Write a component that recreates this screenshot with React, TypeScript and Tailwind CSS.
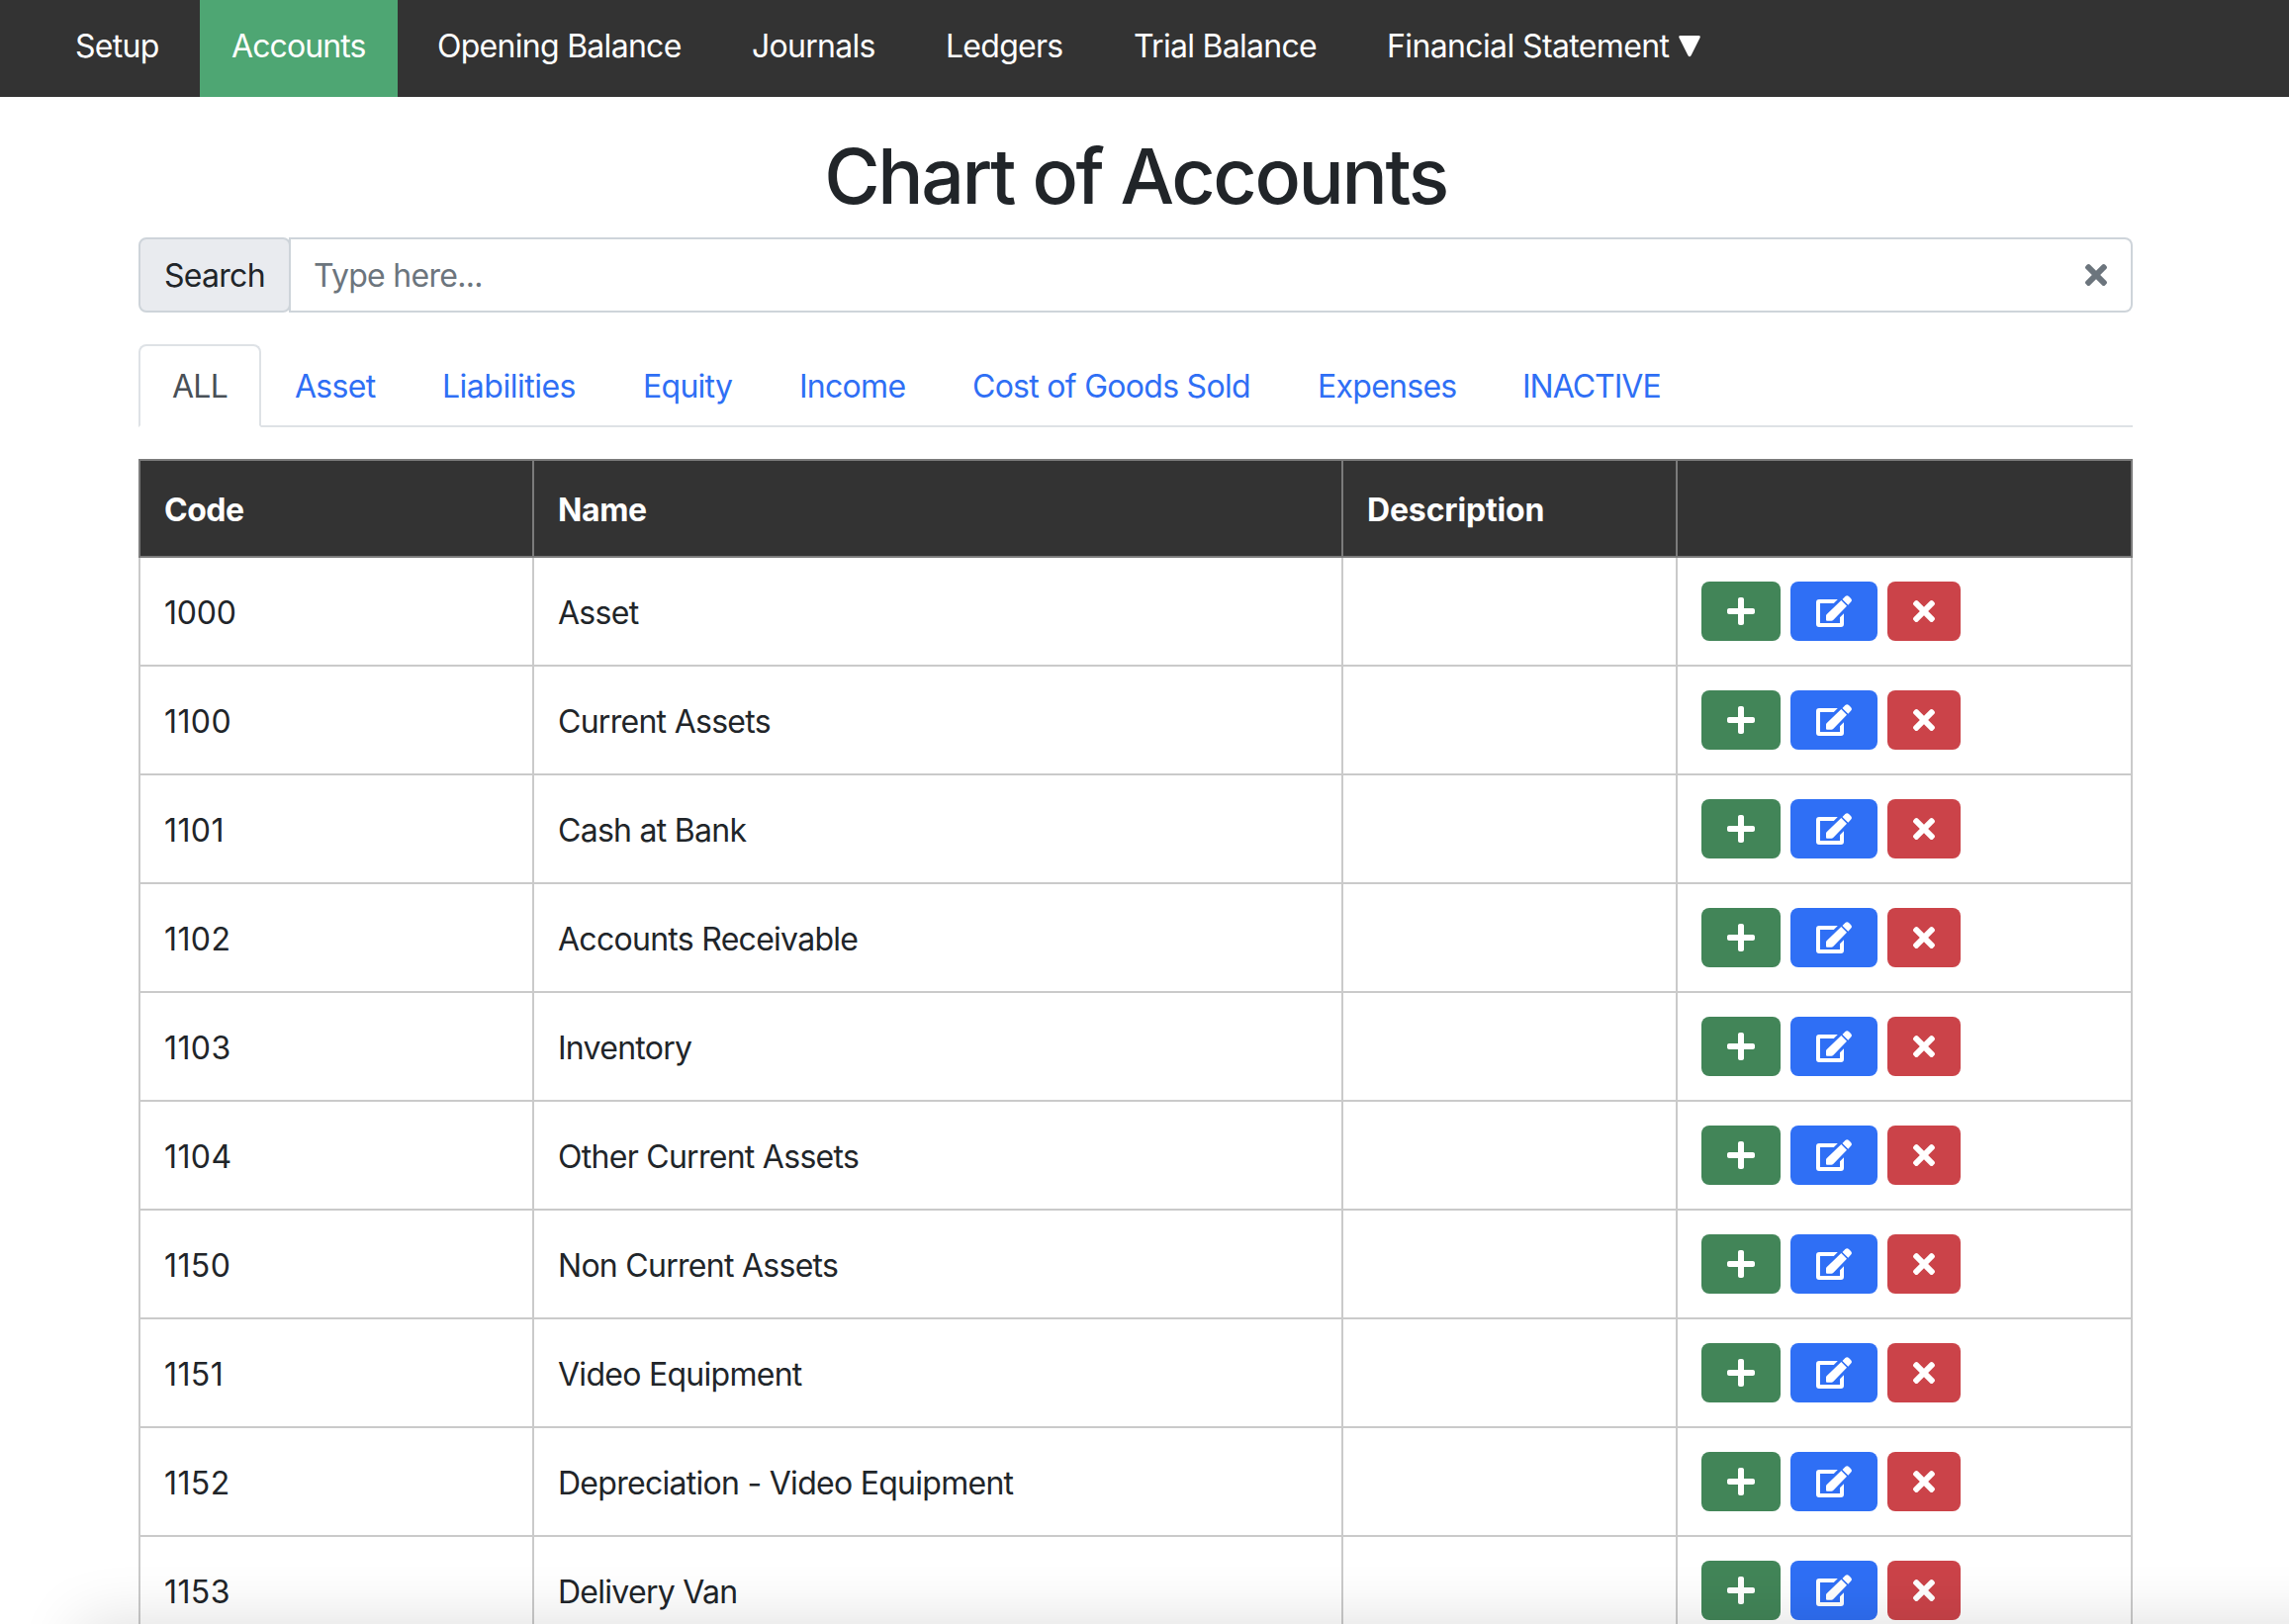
import { FaPlus, FaTimes } from "react-icons/fa";

const navItems = [
  { label: "Setup", width: "w-[150px]" },
  { label: "Accounts", width: "w-[200px] tracking-[-0.9px]", active: true },
  { label: "Opening Balance", width: "w-[310px]" },
  { label: "Journals", width: "w-[188px]" },
  { label: "Ledgers", width: "w-[182px]" },
  { label: "Trial Balance", width: "w-[248px]" },
  { label: "Financial Statement", width: "w-[380px] tracking-[-0.62px]", menu: true },
];

const tabs = [
  { label: "ALL", width: "w-[124px]", active: true },
  { label: "Asset", width: "w-[149px]" },
  { label: "Liabilities", width: "w-[203px] tracking-[-0.5px]" },
  { label: "Equity", width: "w-[158px]" },
  { label: "Income", width: "w-[175px]" },
  { label: "Cost of Goods Sold", width: "w-[349px]" },
  { label: "Expenses", width: "w-[207px]" },
  { label: "INACTIVE", width: "w-[208px] tracking-[-1px]" },
];

const columns = [
  { label: "Code", tracking: "tracking-[-0.5px]" },
  { label: "Name", tracking: "tracking-[-0.4px]" },
  { label: "Description", tracking: "tracking-[-0.15px]" },
  { label: "", tracking: "" },
];

const accounts = [
  ["1000", "Asset"],
  ["1100", "Current Assets"],
  ["1101", "Cash at Bank"],
  ["1102", "Accounts Receivable"],
  ["1103", "Inventory"],
  ["1104", "Other Current Assets"],
  ["1150", "Non Current Assets"],
  ["1151", "Video Equipment"],
  ["1152", "Depreciation - Video Equipment"],
  ["1153", "Delivery Van"],
];

const actionClass = "flex h-[60px] items-center justify-center rounded-lg text-[32px] text-white";
const cellClass = "border-2 border-[#cacaca] px-6 pb-0 pt-[3px]";

function CaretIcon() {
  return (
    <svg className="ml-2.5 inline-block h-[22px] w-[22px] align-baseline" viewBox="0 0 22 22" fill="currentColor">
      <path d="M1.6 0H20.4Q22.2 0 21.6 2L12.6 20Q11 22.6 9.4 20L.4 2Q-.2 0 1.6 0Z" />
    </svg>
  );
}

function EditIcon() {
  return (
    <svg className="h-8 w-9" viewBox="0 0 36 32" fill="currentColor">
      <path d="M3 4H21.8L17.8 8H4V28H24V22.2L28 18.2V29a3 3 0 0 1-3 3H3a3 3 0 0 1-3-3V7a3 3 0 0 1 3-3Z" />
      <path d="M25.3 5.1L31 10.7L17.2 25Q16.4 25.8 15.4 25.8H11Q10 25.8 10 24.8V20.6Q10 19.6 10.8 18.9Z" />
      <path d="M26.5 4L29.4 1Q31.2-.7 33 1L35 3Q36.8 4.8 35.2 6.6L32.3 9.7Z" />
    </svg>
  );
}

function NavBar() {
  return (
    <nav className="flex h-[98px] gap-2 bg-[#333333] pl-11 text-white">
      {navItems.map((item) => (
        <a
          key={item.label}
          href="#"
          className={`${item.width} ${item.active ? "bg-[#4ea673]" : ""} shrink-0 whitespace-nowrap pl-8 pt-[23px] leading-[48px]`}
        >
          {item.label}
          {item.menu && <CaretIcon />}
        </a>
      ))}
    </nav>
  );
}

function SearchBar() {
  return (
    <div className="mt-5 flex h-[76px]">
      <span className="w-[154px] rounded-lg border-2 border-[#ced4da] bg-[#e9ebef] pl-6 leading-[74px]">
        Search
      </span>
      <input
        className="-ml-0.5 h-full flex-1 border-2 border-[#ced4da] border-r-0 bg-transparent pl-[23px] pt-px placeholder:text-[#6c757d] placeholder:opacity-100"
        placeholder="Type here..."
      />
      <button className="flex w-[72px] items-center justify-center rounded-r-lg border-2 border-l-0 border-[#ced4da] text-[32px] text-[#6c757d]">
        <FaTimes />
      </button>
    </div>
  );
}

function Tabs() {
  return (
    <div className="mt-8 flex h-[84px] border-b-2 border-[#dee2e6]">
      {tabs.map((tab) => (
        <a
          key={tab.label}
          href="#"
          className={`${tab.width} ${
            tab.active
              ? "rounded-t-lg border-[#dee2e6] border-b-white bg-white text-[#495057]"
              : "border-transparent text-[#2f6ff5]"
          } h-[84px] shrink-0 whitespace-nowrap border-2 pl-8 pt-[17px] leading-[48px]`}
        >
          {tab.label}
        </a>
      ))}
    </div>
  );
}

function AccountsTable() {
  return (
    <table className="mt-8 w-[2016px] table-fixed border-collapse text-left">
      <colgroup>
        <col className="w-[398px]" />
        <col className="w-[818px]" />
        <col className="w-[338px]" />
        <col className="w-[460px]" />
      </colgroup>
      <thead>
        <tr className="h-[98px] bg-[#333333] text-white">
          {columns.map((column) => (
            <th
              key={column.label}
              className={`${column.tracking} border-2 border-[#7b7b7b] px-6 pb-0 pt-[3px] font-bold`}
            >
              {column.label}
            </th>
          ))}
        </tr>
      </thead>
      <tbody>
        {accounts.map(([code, name]) => (
          <tr key={code} className="h-[110px]">
            <td className={`${cellClass} ${code === "1000" ? "tracking-[-0.2px]" : "tracking-[0.4px]"}`}>
              {code}
            </td>
            <td className={cellClass}>{name}</td>
            <td className={cellClass} />
            <td className="border-2 border-[#cacaca] px-6 py-0">
              <div className="flex gap-2.5">
                <button className={`${actionClass} w-20 bg-[#428558]`}>
                  <FaPlus />
                </button>
                <button className={`${actionClass} w-[88px] bg-[#2f6ff5]`}>
                  <EditIcon />
                </button>
                <button className={`${actionClass} w-[74px] bg-[#cb4349]`}>
                  <FaTimes />
                </button>
              </div>
            </td>
          </tr>
        ))}
      </tbody>
    </table>
  );
}

export default function App() {
  return (
    <div className="relative h-[1642px] w-[2314px] overflow-hidden bg-white font-['Inter',sans-serif] text-[32px] tracking-[-0.72px] text-[#212529]">
      <NavBar />
      <main className="ml-[140px] w-[2016px] pt-[26px]">
        <h1 className="h-24 text-center text-[77px] font-medium leading-[109px] tracking-[-2.35px]">
          Chart of Accounts
        </h1>
        <SearchBar />
        <Tabs />
        <AccountsTable />
      </main>
      <div className="pointer-events-none absolute -right-24 left-[80px] top-full h-24 shadow-[0_0_64px_rgba(0,0,0,0.14)]" />
    </div>
  );
}
